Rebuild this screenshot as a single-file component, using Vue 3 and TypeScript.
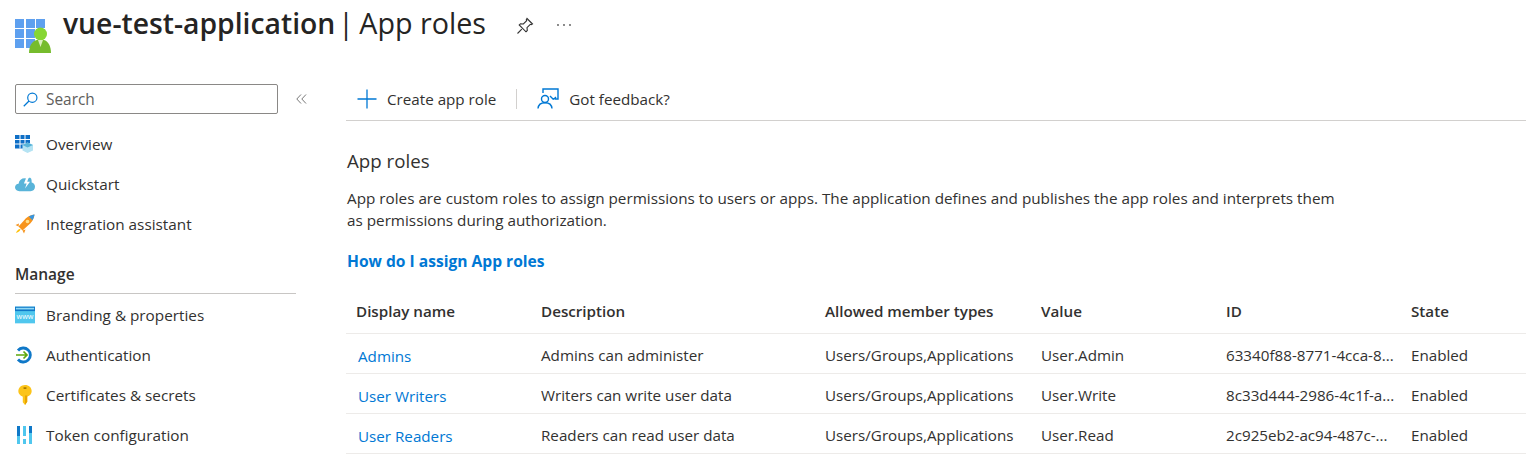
<script setup lang="ts">
type Role = { name: string; description: string; types: string; value: string; id: string; state: string };

const columns = ['Display name', 'Description', 'Allowed member types', 'Value', 'ID', 'State'];

const roles: Role[] = [
  { name: 'Admins', description: 'Admins can administer', types: 'Users/Groups,Applications', value: 'User.Admin', id: '63340f88-8771-4cca-8...', state: 'Enabled' },
  { name: 'User Writers', description: 'Writers can write user data', types: 'Users/Groups,Applications', value: 'User.Write', id: '8c33d444-2986-4c1f-a...', state: 'Enabled' },
  { name: 'User Readers', description: 'Readers can read user data', types: 'Users/Groups,Applications', value: 'User.Read', id: '2c925eb2-ac94-487c-...', state: 'Enabled' },
];

const topNav = ['Overview', 'Quickstart', 'Integration assistant'];
const manageNav = ['Branding & properties', 'Authentication', 'Certificates & secrets', 'Token configuration'];
</script>

<template>
  <div class="page">
    <header class="title-bar">
      <svg class="app-icon" width="36" height="36" viewBox="0 0 36 36">
        <g fill="#5ea0ef">
          <rect x="0" y="0" width="9" height="9" />
          <rect x="11" y="0" width="9" height="9" />
          <rect x="21" y="0" width="9" height="9" />
          <rect x="0" y="10" width="9" height="9" />
          <rect x="11" y="10" width="9" height="9" />
          <rect x="21" y="10" width="9" height="9" />
          <rect x="0" y="20" width="9" height="9" />
          <rect x="11" y="20" width="9" height="9" />
        </g>
        <path d="M14 34c0-7 3-12 8-13h7c4 1 7 6 7 13z" fill="#76bc2d" />
        <circle cx="25.500" cy="15" r="6.500" fill="#86d633" />
        <path d="M23 21h5l-2.500 7z" fill="#d9f0be" />
      </svg>
      <h1 class="title"><b>vue-test-application</b><span class="sep">|</span><span class="page-name">App roles</span></h1>
      <svg class="pin" width="18" height="18" viewBox="0 0 18 18" fill="none" stroke="#333" stroke-width="1.100">
        <path d="M11 1.500l5.500 5.500-1.200.7-1-.4-3.300 3.300.3 2.900-1.300 1.300-6.800-6.800 1.300-1.300 2.900.3 3.300-3.300-.4-1z" />
        <path d="M5.800 12.200L1.500 16.500" />
      </svg>
      <svg class="more" width="16" height="4" viewBox="0 0 16 4" fill="#555">
        <circle cx="2" cy="2" r=".9" />
        <circle cx="8" cy="2" r=".9" />
        <circle cx="14" cy="2" r=".9" />
      </svg>
    </header>

    <div class="body">
      <aside class="sidebar">
        <div class="search-row">
          <label class="search">
            <svg width="15" height="15" viewBox="0 0 14 14" fill="none" stroke="#0078d4" stroke-width="1.100">
              <circle cx="8.700" cy="5.300" r="4.300" />
              <path d="M5.600 8.400L.7 13.300" />
            </svg>
            <span>Search</span>
          </label>
          <svg class="collapse" width="11" height="10" viewBox="0 0 11 10" fill="none" stroke="#777" stroke-width="1">
            <path d="M5 .5L.8 5 5 9.500M10 .5L5.800 5l4.200 4.500" />
          </svg>
        </div>

        <nav class="nav first">
          <a v-for="(item, i) in topNav" :key="item" class="nav-item">
            <svg v-if="i === 0" viewBox="0 0 18 18">
              <path d="M0 0h15v8l-3 1.500v4H0z" fill="#0f6fc6" />
              <path d="M5 0v13.500M10 0v13.500M0 4.500h15M0 9h12" stroke="#fff" stroke-width="1" />
              <path d="M12.500 7.500l5.500 2.500v5.500L12.500 18 7.500 15.500V10z" fill="#b5e3f3" />
              <path d="M12.500 12.500L18 10l-5.500-2.500L7.500 10z" fill="#59b4d9" />
            </svg>
            <svg v-else-if="i === 1" class="wide" viewBox="0 0 18 18">
              <path d="M4 15.500C1.500 15.500 0 14 0 12s1.500-3.300 3.200-3.300C3.700 5.500 6 3.800 8.500 3.800c1 0 2 .3 2.700.8C12 3.500 13 3 14 3.500c1 .8 1 2.500 1 4.200 1.800.4 3 2 3 3.800 0 2.200-1.600 4-4 4z" fill="#59b4d9" />
              <path d="M10.500 2.500L8 8.500h2.500L9 13l4.500-6H11l1.500-4.500z" fill="#fff" />
            </svg>
            <svg v-else class="wide" viewBox="0 0 20 20">
              <path d="M4 9.500l-3.500 1.500 3 1.500zM10.500 15.500L9 19.500l-1.500-3z" fill="#f7941d" />
              <path d="M5 15c-1.700.2-3 1.500-4 4 2.500-.8 4-2.200 4.500-3.800z" fill="#ffc107" />
              <path d="M19.500.5c-4.500.5-8.500 2.800-11 6.500L3.500 12.500l4 4 5.500-5c3.700-2.500 6-6.500 6.500-11z" fill="#f7941d" />
              <path d="M19.500.5c-2 .2-4 1-5.700 2l3.700 3.700c1-1.700 1.800-3.700 2-5.700z" fill="#3a96dd" />
              <circle cx="12.500" cy="7.500" r="1.800" fill="#ffe08a" />
            </svg>
            <span>{{ item }}</span>
          </a>
        </nav>

        <div class="nav-heading">Manage</div>

        <nav class="nav">
          <a v-for="(item, i) in manageNav" :key="item" class="nav-item">
            <svg v-if="i === 0" class="wide" viewBox="0 0 18 18">
              <rect y="1.500" width="18" height="15" fill="#50c7ee" />
              <rect y="1.500" width="18" height="4" fill="#0f78c8" />
              <rect x=".8" y="2.500" width="16.400" height="1.500" fill="#8fd8f4" />
              <text x="9" y="13" text-anchor="middle" font-size="6.500" fill="#fff" font-family="Open Sans, sans-serif">www</text>
            </svg>
            <svg v-else-if="i === 1" viewBox="0 0 18 18" fill="none">
              <path d="M3 4.500a7 7 0 1 1 0 9" stroke="#0f78c8" stroke-width="2.800" />
              <path d="M1 9h11M8.500 5.500L12 9l-3.500 3.500" stroke="#5ea80d" stroke-width="1.700" />
            </svg>
            <svg v-else-if="i === 2" class="wide" viewBox="0 0 18 18">
              <path d="M9 0c3.500 0 6 2.300 6 5.500S12.500 10 11 10.500V15l-2 3-2-2.500v-5C5.500 10 3 8.500 3 5.500S5.500 0 9 0z" fill="#fcc419" />
              <path d="M9 9.500h2V15l-2 3z" fill="#e8a400" />
              <rect x="7.500" y="2" width="3" height="1.500" rx=".7" fill="#a87a00" />
            </svg>
            <svg v-else viewBox="0 0 18 18">
              <rect x="2" y="0" width="3" height="18" fill="#0f78c8" />
              <rect x="2" y="10" width="3" height="8" fill="#50c7ee" />
              <rect x="8" y="0" width="3" height="18" fill="#50c7ee" />
              <rect x="8" y="10" width="3" height="3" fill="#fff" />
              <rect x="14" y="0" width="3" height="18" fill="#0f78c8" />
              <rect x="14" y="7" width="3" height="11" fill="#50c7ee" />
            </svg>
            <span>{{ item }}</span>
          </a>
        </nav>
      </aside>

      <main class="main">
        <div class="toolbar">
          <button class="tool">
            <svg width="20" height="20" viewBox="0 0 20 20" stroke="#0078d4" stroke-width="1.300">
              <path d="M10 .5v19M.5 10h19" />
            </svg>
            <span>Create app role</span>
          </button>
          <i class="tool-divider"></i>
          <button class="tool">
            <svg width="22" height="22" viewBox="0 0 22 22" fill="none" stroke="#0078d4" stroke-width="1.400">
              <circle cx="8" cy="11" r="3.500" />
              <path d="M1 20.500c.3-3.500 3-5.800 7-5.800s6.700 2.300 7 5.800" />
              <path d="M6 5V1h15v10h-3M19 9l-2.500 2.500M13 8l3.500 3.500" />
            </svg>
            <span>Got feedback?</span>
          </button>
        </div>

        <section class="content">
          <h2>App roles</h2>
          <p>App roles are custom roles to assign permissions to users or apps. The application defines and publishes the app roles and interprets them as permissions during authorization.</p>
          <a class="help">How do I assign App roles</a>

          <div class="table">
            <div class="row head">
              <div v-for="col in columns" :key="col" class="cell">{{ col }}</div>
            </div>
            <div v-for="role in roles" :key="role.name" class="row">
              <div class="cell link">{{ role.name }}</div>
              <div class="cell">{{ role.description }}</div>
              <div class="cell">{{ role.types }}</div>
              <div class="cell">{{ role.value }}</div>
              <div class="cell">{{ role.id }}</div>
              <div class="cell">{{ role.state }}</div>
            </div>
          </div>
        </section>
      </main>
    </div>
  </div>
</template>

<style>
html,
body {
  margin: 0;
  background: #fff;
  overflow: hidden;
}
</style>

<style scoped>
.page {
  width: 1526px;
  height: 461px;
  overflow: hidden;
  font-family: 'Open Sans', 'Noto Sans', sans-serif;
  font-size: 15.2px;
  color: #323130;
}

.title-bar {
  height: 84px;
  display: flex;
  align-items: flex-start;
  padding-left: 15px;
  box-sizing: border-box;
}

.app-icon {
  margin-top: 19px;
  margin-right: 12px;
}

.title {
  margin: 4px 0 0;
  font-size: 28.300px;
  line-height: 38px;
  font-weight: 400;
  color: #252423;
}

.title b {
  font-weight: 600;
}

.sep {
  margin-left: 3px;
}

.page-name {
  margin-left: 5.500px;
  font-size: 28.700px;
}

.pin {
  margin: 17px 0 0 30px;
}

.more {
  margin: 23px 0 0 22px;
}

.body {
  display: flex;
}

.sidebar {
  width: 346px;
  flex: none;
  box-sizing: border-box;
  padding-left: 15px;
}

.search-row {
  display: flex;
  align-items: center;
  height: 30px;
}

.search {
  width: 263px;
  height: 30px;
  box-sizing: border-box;
  border: 1px solid #8a8886;
  border-radius: 2px;
  display: flex;
  align-items: center;
  gap: 8px;
  padding-left: 7px;
  font-size: 15.400px;
  color: #605e5c;
}

.collapse {
  margin-left: 18px;
}

.nav {
  display: flex;
  flex-direction: column;
}

.nav.first {
  margin-top: 10px;
}

.nav-item {
  height: 40px;
  display: flex;
  align-items: center;
  font-size: 15.300px;
}

.nav-item svg {
  width: 18px;
  height: 18px;
  margin-right: 13px;
  flex: none;
}

.nav-item svg.wide {
  width: 20px;
  height: 20px;
  margin-right: 11px;
}

.nav-heading {
  width: 281px;
  height: 30px;
  line-height: 20px;
  font-size: 15.500px;
  font-weight: 600;
  border-bottom: 1px solid #c8c6c4;
  margin: 20px 0 1px;
  box-sizing: border-box;
}

.main {
  flex: 1;
  min-width: 0;
}

.toolbar {
  height: 30px;
  display: flex;
  align-items: center;
  border-bottom: 1px solid #d2d0ce;
  padding-left: 11px;
  padding-bottom: 6px;
}

.tool {
  border: 0;
  background: none;
  padding: 0;
  font: inherit;
  color: inherit;
  display: flex;
  align-items: center;
  gap: 10px;
}

.tool-divider {
  width: 1px;
  height: 20px;
  background: #d2d0ce;
  margin: 0 20px;
}

.content h2,
.content p,
.help {
  margin-left: 1px;
}

.content h2 {
  margin-top: 28px;
  margin-bottom: 0;
  font-size: 18.700px;
  line-height: 24px;
  font-weight: 400;
}

.content p {
  margin-top: 14px;
  margin-bottom: 0;
  width: 1000px;
  font-size: 15.280px;
  line-height: 22px;
}

.help {
  display: block;
  margin-top: 20px;
  font-size: 15.600px;
  font-weight: 700;
  color: #0078d4;
  line-height: 20px;
}

.table {
  margin-top: 23px;
}

.row {
  display: grid;
  grid-template-columns: 185px 284px 216px 185px 185px 1fr;
  height: 40px;
  box-sizing: border-box;
  align-items: center;
  padding-left: 10px;
  padding-top: 2px;
  border-bottom: 1px solid #edebe9;
}

.head {
  font-weight: 600;
  padding-top: 0;
  padding-bottom: 5px;
}

.link {
  color: #0078d4;
  padding-left: 2px;
  padding-top: 2px;
}
</style>
